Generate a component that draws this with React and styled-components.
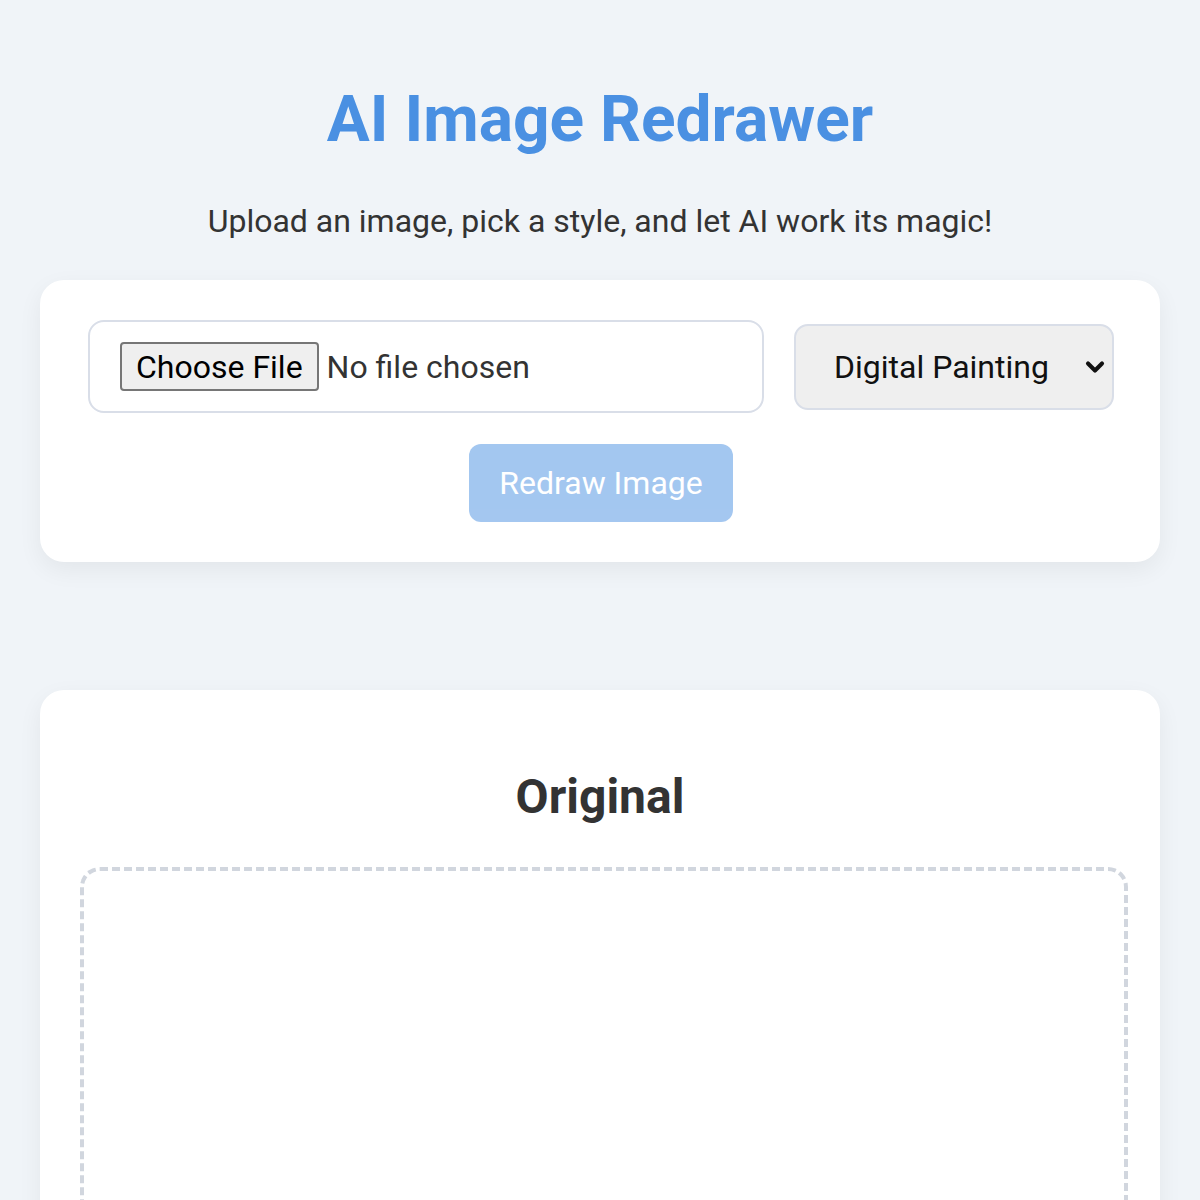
import styled, { createGlobalStyle } from "styled-components"
import { ChevronDown } from "lucide-react"

const GlobalStyle = createGlobalStyle`
  body {
    margin: 0;
    background: #f0f4f8;
    font-family: Roboto, "Liberation Sans", sans-serif;
    color: #333;
  }
`

const Page = styled.div`
  max-width: 1120px;
  margin: 0 auto;
  padding: 80px 0 0;
`

const Title = styled.h1`
  margin: 0;
  text-align: center;
  color: #4a90e2;
  font-size: 64px;
  font-weight: 700;
  line-height: 80px;
`

const Subtitle = styled.p`
  margin: 40px 0 38px;
  text-align: center;
  font-size: 32px;
  line-height: 42px;
  color: #333;
`

const Card = styled.section`
  background: #fff;
  border-radius: 24px;
  box-shadow: 0 8px 24px rgba(0, 0, 0, 0.06);
  padding: ${(p) => p.$pad};
  margin-bottom: 128px;
`

const Controls = styled.div`
  display: flex;
  align-items: center;
  gap: 30px;
`

const FileInput = styled.input`
  flex: 1;
  box-sizing: border-box;
  font-family: Roboto, "Liberation Sans", sans-serif;
  font-size: 32px;
  padding: 20px 30px;
  border: 2px solid #d9dee8;
  border-radius: 16px;
  background: #fff;
  color: #333;

  &::file-selector-button {
    font: inherit;
    color: #000;
    height: 49px;
    padding: 0 14px;
    margin-right: 8px;
    border: 2px solid #767676;
    border-radius: 4px;
    background: #efefef;
  }
`

const SelectWrap = styled.div`
  position: relative;
  width: 320px;
`

const Select = styled.select`
  appearance: none;
  width: 100%;
  height: 86px;
  box-sizing: border-box;
  font-family: Roboto, "Liberation Sans", sans-serif;
  font-size: 32px;
  padding: 0 48px 0 38px;
  border: 2px solid #d9dee8;
  border-radius: 14px;
  background: #efefef;
  color: #111;
`

const Chevron = styled(ChevronDown)`
  position: absolute;
  right: 5px;
  top: 50%;
  transform: translateY(-50%);
  pointer-events: none;
  color: #111;
`

const Actions = styled.div`
  display: flex;
  justify-content: center;
  margin-top: 31px;
`

const Button = styled.button`
  font-family: Roboto, "Liberation Sans", sans-serif;
  font-size: 32px;
  color: #fff;
  background: #4a90e2;
  border: none;
  border-radius: 12px;
  padding: 20px 30px;
  line-height: 38px;
  &:disabled {
    opacity: 0.5;
  }
`

const Heading = styled.h2`
  margin: 39px 8px 42px 0;
  text-align: center;
  font-size: 48px;
  font-weight: 700;
  line-height: 56px;
  color: #333;
`

const DropZone = styled.div`
  height: 420px;
  border: 4px dashed #d1d6de;
  border-radius: 20px;
`

export default function App() {
  return (
    <>
      <GlobalStyle />
      <Page>
        <Title>AI Image Redrawer</Title>
        <Subtitle>Upload an image, pick a style, and let AI work its magic!</Subtitle>
        <Card $pad="40px 46px 40px 48px">
          <Controls>
            <FileInput type="file" accept="image/*" />
            <SelectWrap>
              <Select defaultValue="digital">
                <option value="digital">Digital Painting</option>
                <option value="oil">Oil Painting</option>
                <option value="watercolor">Watercolor</option>
                <option value="sketch">Pencil Sketch</option>
              </Select>
              <Chevron size={28} strokeWidth={3.5} />
            </SelectWrap>
          </Controls>
          <Actions>
            <Button disabled>Redraw Image</Button>
          </Actions>
        </Card>
        <Card $pad="40px 32px 40px 40px">
          <Heading>Original</Heading>
          <DropZone />
        </Card>
      </Page>
    </>
  )
}
